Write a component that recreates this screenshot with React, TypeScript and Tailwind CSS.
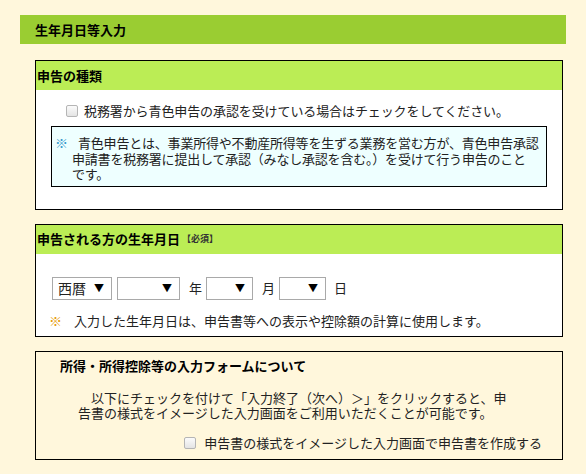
import React from 'react';

const font = { fontFamily: '"Noto Sans CJK JP", "Noto Sans", sans-serif' };

function Check() {
  return (
    <span className="inline-block w-[12px] h-[12px] rounded-[2px] border border-[#b5b5b5] bg-gradient-to-b from-[#fbfbfb] to-[#e4e4e4] shrink-0" />
  );
}

function Select({ w, label }: { w: string; label?: string }) {
  return (
    <div className={`${w} h-[23px] border border-[#a9a9a9] bg-white flex items-center justify-between pl-[5px] pr-[7px]`}>
      <span className="text-[14px] text-[#222]">{label ?? ''}</span>
      <span className="text-[10px] text-black">▼</span>
    </div>
  );
}

export default function App() {
  return (
    <div style={font} className="min-h-[474px] w-[586px] bg-[#fff7dc] pt-[15px] pl-[20px] text-[13px] leading-[16px] text-[#222]">
      {/* Page title */}
      <div className="w-[546px] h-[29px] bg-[#9acd32] pl-[15px] flex items-center font-bold text-[13px] text-black">
        生年月日等入力
      </div>

      {/* 申告の種類 */}
      <div className="mt-[16px] ml-[15px] w-[528px] border border-black bg-white">
        <div className="h-[29px] bg-[#bbed55] pl-[1px] flex items-center font-bold text-black">申告の種類</div>
        <div className="pt-[13px] pl-[30px] flex items-center gap-[6px]">
          <Check />
          <span className="tracking-[-0.1px]">税務署から青色申告の承認を受けている場合はチェックをしてください。</span>
        </div>
        <div className="mt-[7px] mx-[15px] mb-[22px] border border-black bg-[#eeffff] pl-[3px] pt-[8px] pb-[4px] flex leading-[15.5px] tracking-[-0.2px]">
          <span className="w-[17px] shrink-0 text-[#3399cc]">※</span>
          <p className="whitespace-nowrap indent-[6px]">
            青色申告とは、事業所得や不動産所得等を生ずる業務を営む方が、青色申告承認<br />申請書を税務署に提出して承認（みなし承認を含む。）を受けて行う申告のこと<br />です。
          </p>
        </div>
      </div>

      {/* 申告される方の生年月日 */}
      <div className="mt-[14px] ml-[15px] w-[528px] border border-black bg-white">
        <div className="h-[29px] bg-[#bbed55] pl-[1px] flex items-center font-bold text-black">
          申告される方の生年月日
          <span className="ml-[2px] text-[9px] text-[#333]">【必須】</span>
        </div>
        <div className="pt-[23px] pl-[16px] flex items-center">
          <Select w="w-[60px]" label="西暦" />
          <div className="ml-[5px]"><Select w="w-[63px]" /></div>
          <span className="ml-[9px] mr-[4px]">年</span>
          <Select w="w-[47px]" />
          <span className="ml-[9px] mr-[4px]">月</span>
          <Select w="w-[47px]" />
          <span className="ml-[8px]">日</span>
        </div>
        <div className="mt-[13px] pb-[7px] pl-[13px] flex">
          <span className="w-[25px] text-[#e69a00]">※</span>
          <span>入力した生年月日は、申告書等への表示や控除額の計算に使用します。</span>
        </div>
      </div>

      {/* 所得・所得控除等の入力フォームについて */}
      <div className="mt-[14px] ml-[15px] w-[528px] border border-black bg-[#fff7dc] pt-[6px] pb-[8px]">
        <div className="pl-[24px] font-bold text-black">所得・所得控除等の入力フォームについて</div>
        <p className="mt-[16px] ml-[42px] whitespace-nowrap leading-[15px] indent-[13px]">
          以下にチェックを付けて「入力終了（次へ）＞」をクリックすると、申<br />告書の様式をイメージした入力画面をご利用いただくことが可能です。
        </p>
        <div className="mt-[15px] pr-[20px] flex items-center justify-end gap-[8px]">
          <Check />
          <span>申告書の様式をイメージした入力画面で申告書を作成する</span>
        </div>
      </div>
    </div>
  );
}
